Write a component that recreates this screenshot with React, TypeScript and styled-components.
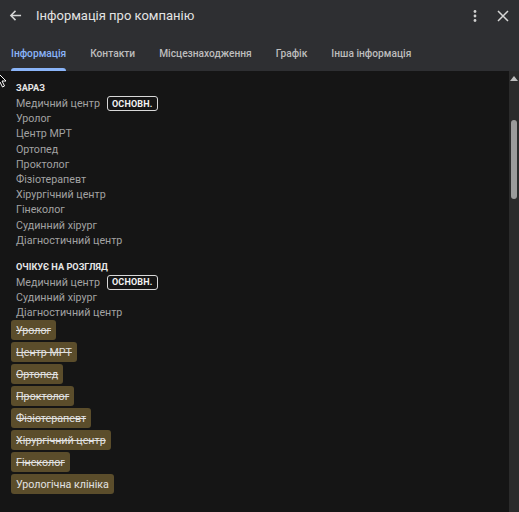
import React from "react";
import styled, { createGlobalStyle } from "styled-components";

const Global = createGlobalStyle`
  html, body { margin: 0; padding: 0; background: #151515; }
  body { font-family: Roboto, "Noto Sans", Arial, sans-serif; }
`;

const Page = styled.div`
  position: relative;
  width: 519px;
  height: 512px;
  display: flex;
  flex-direction: column;
  background: #151515;
  overflow: hidden;
`;

const Header = styled.header`
  background: #2e2f32;
  display: flex;
  flex-direction: column;
  flex: none;
`;

const TitleRow = styled.div`
  height: 31px;
  display: flex;
  align-items: center;
  padding: 0 9px 0 8px;
  gap: 13px;
`;

const Title = styled.h1`
  margin: 0;
  flex: 1;
  font-size: 13px;
  font-weight: 400;
  color: #e3e3e3;
`;

const IconBtn = styled.button`
  background: none;
  border: none;
  padding: 0;
  display: flex;
  align-items: center;
  justify-content: center;
  color: #d0d0d0;
  width: 15px;
  height: 16px;
`;

const TabBar = styled.nav`
  display: flex;
  height: 40px;
  padding-left: 11px;
  gap: 24px;
`;

const Tab = styled.div<{ $active?: boolean }>`
  position: relative;
  display: flex;
  align-items: center;
  padding-top: 4px;
  font-size: 10.2px;
  font-weight: 500;
  color: ${(p) => (p.$active ? "#8ab4f8" : "#bdbdbd")};
  &::after {
    content: "";
    display: ${(p) => (p.$active ? "block" : "none")};
    position: absolute;
    left: 0;
    right: 0;
    bottom: 0;
    height: 3px;
    border-radius: 3px 3px 0 0;
    background: #8ab4f8;
  }
`;

const Body = styled.div`
  flex: 1;
  display: flex;
  min-height: 0;
`;

const Content = styled.main`
  flex: 1;
  padding: 10px 0 0 11px;
  display: flex;
  flex-direction: column;
`;

const SectionTitle = styled.div`
  font-size: 9.2px;
  font-weight: 700;
  color: #e6e6e6;
  padding-left: 5px;
  height: 13px;
  line-height: 13px;
  margin-bottom: 2px;
`;

const Item = styled.div`
  display: flex;
  align-items: center;
  gap: 7px;
  height: 15.2px;
  padding-left: 5px;
  font-size: 10.7px;
  color: #a2a2a2;
  white-space: nowrap;
`;

const Badge = styled.span`
  border: 1.5px solid #d8d8d8;
  border-radius: 3px;
  padding: 0 4px;
  height: 13px;
  display: inline-flex;
  align-items: center;
  font-size: 9px;
  font-weight: 700;
  color: #f2f2f2;
  letter-spacing: 0.2px;
`;

const Section = styled.section<{ $gap?: number }>`
  display: flex;
  flex-direction: column;
  margin-bottom: ${(p) => p.$gap ?? 0}px;
`;

const Chips = styled.div`
  display: flex;
  flex-direction: column;
  align-items: flex-start;
  gap: 2px;
`;

const Chip = styled.span<{ $removed?: boolean }>`
  background: #5b4d2b;
  color: #e2e2e2;
  border-radius: 3px;
  height: 20px;
  display: inline-flex;
  align-items: center;
  padding: 0 5px;
  font-size: 10.7px;
  text-decoration: ${(p) => (p.$removed ? "line-through" : "none")};
  white-space: nowrap;
`;

const Scrollbar = styled.div`
  width: 10px;
  background: #2b2b2b;
  display: flex;
  flex-direction: column;
  align-items: center;
  padding-top: 5px;
  gap: 39px;
`;

const Thumb = styled.div`
  width: 6px;
  height: 79px;
  border-radius: 3px;
  background: #9b9b9b;
`;

const Cursor = styled.svg`
  position: absolute;
  left: -4px;
  top: 71px;
`;

const current = [
  "Уролог",
  "Центр МРТ",
  "Ортопед",
  "Проктолог",
  "Фізіотерапевт",
  "Хірургічний центр",
  "Гінеколог",
  "Судинний хірург",
  "Діагностичний центр",
];

const removed = [
  "Уролог",
  "Центр МРТ",
  "Ортопед",
  "Проктолог",
  "Фізіотерапевт",
  "Хірургічний центр",
  "Гінеколог",
];

export default function App() {
  return (
    <>
      <Global />
      <Page>
        <Header>
          <TitleRow>
            <IconBtn aria-label="Назад">
              <svg width="13" height="13" viewBox="0 0 14 14" fill="none" stroke="#d6d6d6" strokeWidth="1.6">
                <path d="M13 7H2M7 2L2 7l5 5" />
              </svg>
            </IconBtn>
            <Title>Інформація про компанію</Title>
            <IconBtn aria-label="Меню">
              <svg width="4" height="14" viewBox="0 0 4 14" fill="#d0d0d0">
                <circle cx="2" cy="2.5" r="1.4" />
                <circle cx="2" cy="7" r="1.4" />
                <circle cx="2" cy="11.5" r="1.4" />
              </svg>
            </IconBtn>
            <IconBtn aria-label="Закрити">
              <svg width="12" height="12" viewBox="0 0 12 12" stroke="#d6d6d6" strokeWidth="1.5">
                <path d="M1 1l10 10M11 1L1 11" />
              </svg>
            </IconBtn>
          </TitleRow>
          <TabBar>
            <Tab $active>Інформація</Tab>
            <Tab>Контакти</Tab>
            <Tab>Місцезнаходження</Tab>
            <Tab>Графік</Tab>
            <Tab>Інша інформація</Tab>
          </TabBar>
        </Header>
        <Body>
          <Content>
            <Section $gap={12}>
              <SectionTitle>ЗАРАЗ</SectionTitle>
              <Item>
                Медичний центр <Badge>ОСНОВН.</Badge>
              </Item>
              {current.map((c) => (
                <Item key={c}>{c}</Item>
              ))}
            </Section>
            <Section>
              <SectionTitle>ОЧІКУЄ НА РОЗГЛЯД</SectionTitle>
              <Item>
                Медичний центр <Badge>ОСНОВН.</Badge>
              </Item>
              <Item>Судинний хірург</Item>
              <Item>Діагностичний центр</Item>
              <Chips>
                {removed.map((c) => (
                  <Chip key={c} $removed>
                    {c}
                  </Chip>
                ))}
                <Chip>Урологічна клініка</Chip>
              </Chips>
            </Section>
          </Content>
          <Scrollbar>
            <svg width="8" height="5" viewBox="0 0 8 5" fill="#bdbdbd">
              <path d="M0 5L4 0l4 5z" />
            </svg>
            <Thumb />
          </Scrollbar>
        </Body>
        <Cursor width="12" height="17" viewBox="0 0 12 17" aria-hidden>
          <path d="M1 1v13l3-3 2.5 5 2-1-2.5-5H10z" fill="#000" stroke="#fff" strokeWidth="1" />
        </Cursor>
      </Page>
    </>
  );
}
